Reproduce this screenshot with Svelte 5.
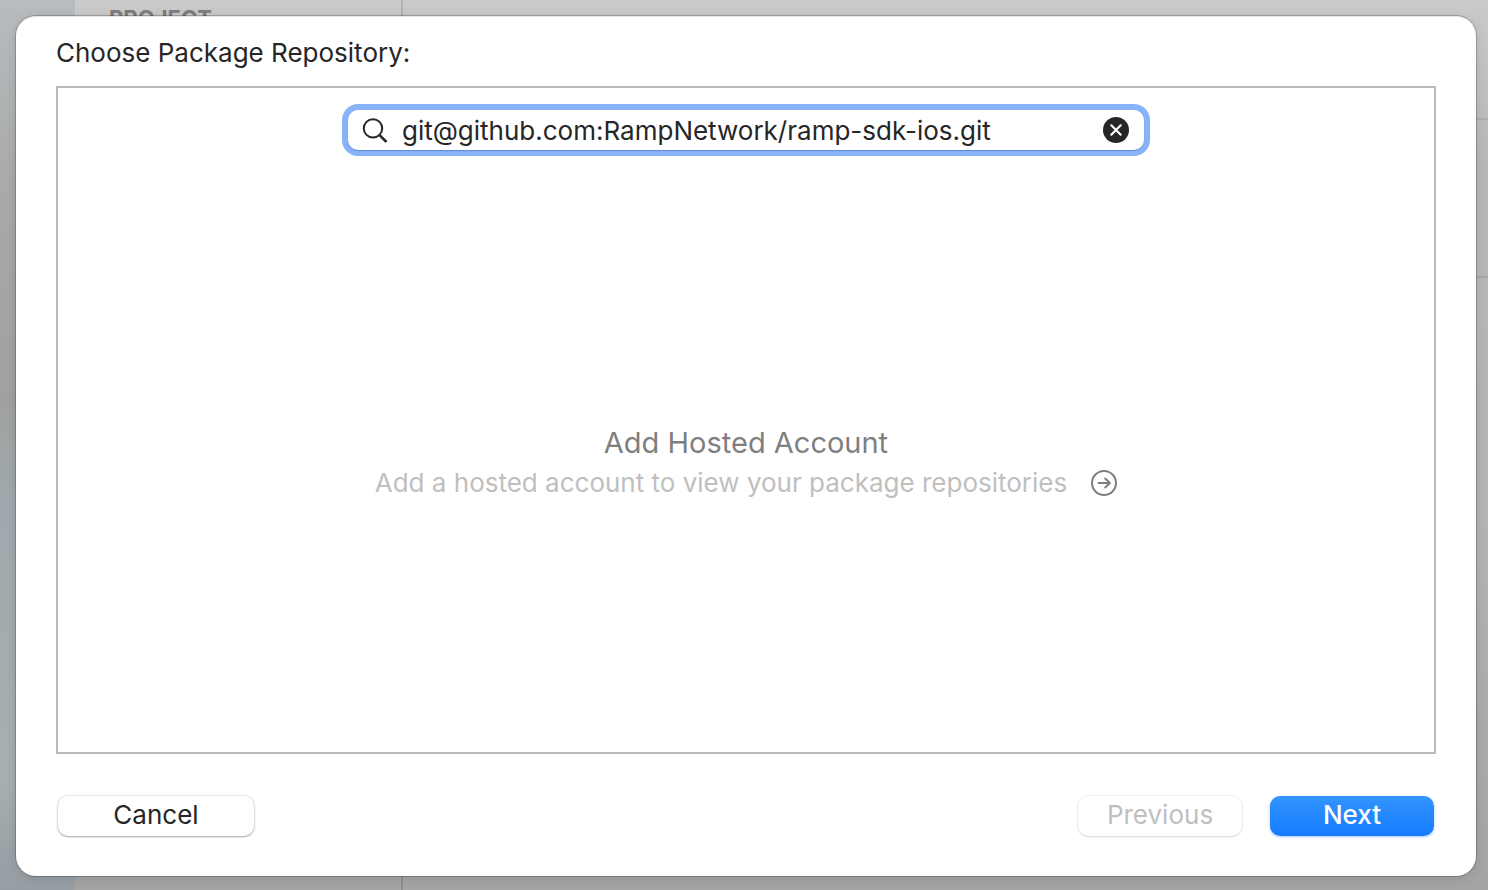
<script>
    let query = $state("git@github.com:RampNetwork/ramp-sdk-ios.git");
    let searchField;

    function clearQuery() {
        query = "";
        searchField.focus();
    }
</script>

<div class="window">
    <div class="editor" aria-hidden="true">
        <div class="navigator"></div>
        <div class="targets">
            <span>PROJECT</span>
        </div>
        <div class="settings">
            <div class="row tabs"></div>
            <div class="row options"></div>
        </div>
    </div>

    <div class="sheet" role="dialog" aria-labelledby="sheet-title">
        <h1 id="sheet-title"><label for="repository">Choose Package Repository:</label></h1>

        <div class="panel">
            <div class="search">
                <svg width="26" height="26" viewBox="0 0 26 26" fill="none" stroke="#262626" stroke-linecap="round">
                    <circle cx="11" cy="11.4" r="9.2" stroke-width="2" />
                    <path d="M17.8 18.4 L23.7 24.2" stroke-width="2.6" />
                </svg>
                <input id="repository" type="text" spellcheck="false" bind:value={query} bind:this={searchField} />
                <button class="clear" type="button" aria-label="Clear" onclick={clearQuery}>
                    <svg width="26" height="26" viewBox="0 0 26 26">
                        <circle cx="13" cy="13" r="13" fill="#262626" />
                        <path d="M8.3 8.3 L17.7 17.7 M17.7 8.3 L8.3 17.7" stroke="#fff" stroke-width="2.1" stroke-linecap="round" />
                    </svg>
                </button>
            </div>

            <div class="empty">
                <h2>Add Hosted Account</h2>
                <div class="hint">
                    <p>Add a hosted account to view your package repositories</p>
                    <button class="add" type="button" aria-label="Add account">
                        <svg width="26" height="26" viewBox="0 0 26 26" fill="none" stroke="#7f7f7f" stroke-width="2" stroke-linecap="round" stroke-linejoin="round">
                            <circle cx="13" cy="13" r="12" />
                            <path d="M7.5 13 H18.7 M14.2 8.5 L18.9 13 L14.2 17.5" />
                        </svg>
                    </button>
                </div>
            </div>
        </div>

        <div class="actions">
            <button class="push cancel" type="button">Cancel</button>
            <button class="push" type="button" disabled>Previous</button>
            <button class="push primary" type="button">Next</button>
        </div>
    </div>
</div>

<style>
    :global(body) {
        margin: 0;
    }

    .window {
        position: relative;
        height: 100vh;
        overflow: hidden;
        font-family: Inter, "Liberation Sans", sans-serif;
        font-size: 26px;
        color: #262626;
    }

    .editor {
        display: grid;
        grid-template-columns: 75px 328px 1fr;
        height: 100%;
        background: linear-gradient(#cacaca 0, #b8b8b8 160px, #b4b4b4 60%, #a4a4a4);
    }

    .navigator {
        background: linear-gradient(#b8bcbf 0, #a8a9a8 200px, #a0a2a0 400px, #a0a9ad 500px, #a7afb1 780px, #969da3);
    }

    .targets {
        box-sizing: border-box;
        padding: 6px 34px;
        border-right: 2px solid rgba(0, 0, 0, 0.12);
        font-size: 22px;
        line-height: 24px;
        font-weight: 700;
        color: #7d7d7d;
    }

    .row {
        box-sizing: border-box;
        border-bottom: 2px solid rgba(0, 0, 0, 0.08);
    }

    .tabs {
        height: 120px;
    }

    .options {
        height: 158px;
    }

    .sheet {
        position: absolute;
        inset: 16px 12px 14px 16px;
        box-sizing: border-box;
        display: flex;
        flex-direction: column;
        padding: 20px 40px 40px;
        border-radius: 20px;
        background: #fff;
        box-shadow: inset 0 1px 0 #e4e4e4, 0 0 0 1px rgba(0, 0, 0, 0.2), 0 2px 12px rgba(0, 0, 0, 0.12);
    }

    h1, h2, p {
        margin: 0;
        font-weight: 400;
    }

    h1 {
        margin-bottom: 16px;
        font-size: 26px;
        line-height: 34px;
    }

    .panel {
        flex: 1;
        display: flex;
        flex-direction: column;
        align-items: center;
        padding: 22px 20px 0;
        border: 2px solid #bababa;
    }

    .search {
        box-sizing: border-box;
        display: flex;
        align-items: center;
        gap: 14px;
        width: 100%;
        max-width: 796px;
        height: 40px;
        padding: 0 15px 0 14px;
        border-radius: 10px;
        background: #fff;
        box-shadow: 0 1px 1px rgba(60, 100, 170, 0.5), 0 0 0 6px #88b3f8;
    }

    .search input {
        flex: 1;
        min-width: 0;
        height: 36px;
        padding: 0;
        border: 0;
        outline: none;
        background: none;
        font: inherit;
        color: inherit;
    }

    button {
        font: inherit;
        cursor: default;
    }

    .clear, .add {
        display: flex;
        padding: 0;
        border: 0;
        background: none;
    }

    .empty {
        flex: 1;
        display: flex;
        flex-direction: column;
        align-items: center;
        justify-content: center;
        padding-top: 24px;
        line-height: 40px;
    }

    h2 {
        font-size: 29px;
        color: #7f7f7f;
    }

    .hint {
        display: flex;
        align-items: center;
        gap: 24px;
        color: #bfbfbf;
    }

    .actions {
        display: flex;
        gap: 28px;
        margin-top: 42px;
    }

    .push {
        width: 164px;
        height: 40px;
        padding: 0 0 4px;
        border: 0;
        border-radius: 10px;
        background: #fff;
        color: #262626;
        box-shadow: 0 0 0 1px rgba(0, 0, 0, 0.07), 0 1px 2px rgba(0, 0, 0, 0.3);
    }

    .push:disabled {
        color: #bfbfbf;
        box-shadow: 0 0 0 1px rgba(0, 0, 0, 0.04), 0 1px 2px rgba(0, 0, 0, 0.12);
    }

    .cancel {
        width: 196px;
        margin: 0 auto 0 2px;
    }

    .primary {
        margin-right: 2px;
        background: linear-gradient(#3395ff, #147bff);
        color: #fff;
        font-weight: 500;
        box-shadow: 0 1px 3px rgba(20, 123, 255, 0.4);
    }
</style>
